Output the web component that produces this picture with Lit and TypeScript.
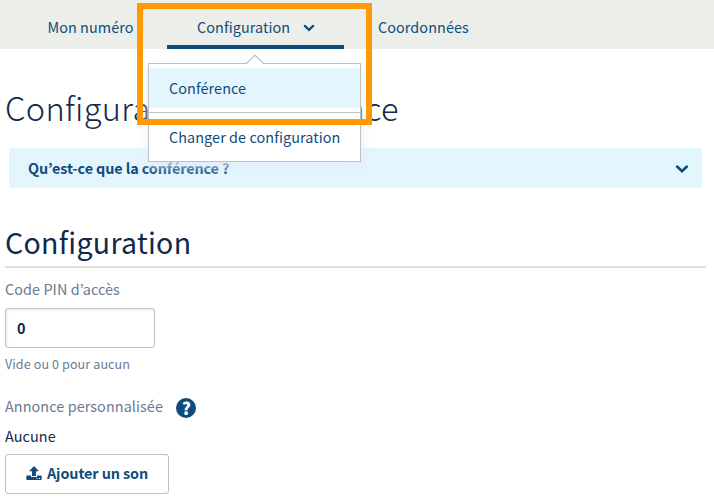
import { LitElement, html, css } from "lit";
import { customElement, property } from "lit/decorators.js";

@customElement("chevron-icon")
class ChevronIcon extends LitElement {
  static styles = css`
    :host { display: block; width: 12px; height: 8px; }
    svg { display: block; width: 100%; height: 100%; }
    path { fill: none; stroke: #0f4c7d; stroke-width: 2.2; stroke-linecap: round; stroke-linejoin: miter; }
  `;
  render() {
    return html`<svg viewBox="0 0 12 8"><path d="M1.8 1.9 6 5.9 10.2 1.9" /></svg>`;
  }
}

@customElement("nav-menu")
class NavMenu extends LitElement {
  @property({ attribute: false }) items: string[] = [];
  static styles = css`
    :host {
      display: block; box-sizing: border-box; width: 213px; height: 99px;
      background: #fff; border: 1px solid #bfc0c3;
      box-shadow: 0 5px 10px rgba(225, 236, 250, 0.9);
    }
    .arrow { position: absolute; left: 97px; top: -10px; width: 18px; height: 11px; }
    .fill { fill: #fff; }
    .edge { fill: none; stroke: #bfc0c3; stroke-width: 1.2; }
    .item { padding: 4px 0; height: 40px; }
    .item + .item { border-top: 1px solid #bfc0c3; }
    .label { height: 40px; line-height: 40px; padding-left: 20px; white-space: nowrap; }
    .active { background: #e3f6fd; }
  `;
  render() {
    return html`
      <svg class="arrow" viewBox="0 0 18 11"><path class="fill" d="M.5 9.5 9 1.2 17.5 9.5V11H.5Z" /><path class="edge" d="M0 9.5H.5L9 1.2 17.5 9.5H18" /></svg>
      ${this.items.map((t, i) => html`<div class="item"><div class="label ${i === 0 ? "active" : ""}">${t}</div></div>`)}
    `;
  }
}

@customElement("app-root")
class AppRoot extends LitElement {
  static styles = css`
    :host {
      display: block; position: relative; width: 714px; height: 499px; overflow: hidden;
      background: #fff; color: #0f4c7d;
      font-family: "Noto Sans CJK KR", "Noto Sans", sans-serif; font-size: 14.4px; letter-spacing: 0.08px;
    }
    nav { display: flex; height: 49px; background: #ebeee9; padding-left: 47px; box-sizing: border-box; line-height: 54px; }
    .first { width: 120px; text-indent: 0.4px; }
    .current { box-sizing: border-box; width: 177px; border-bottom: 4px solid #0f4c7d; padding-left: 30px; display: flex; position: relative; }
    .current span { width: 106px; }
    .current chevron-icon { margin-top: 24px; }
    .last { padding-left: 34px; }
    nav-menu { position: absolute; left: -19px; top: 63px; line-height: normal; }
    .frame { position: absolute; left: 137px; top: 3px; width: 235px; height: 122px; box-sizing: border-box; border: 6px solid #ff9906; }
    h1, h2 { margin: 0; color: #10294c; white-space: nowrap; }
    h1 { font-size: 32.5px; font-weight: 200; letter-spacing: 0.35px; word-spacing: 16px; height: 99px; line-height: 116px; padding-left: 5px; }
    .info { margin-left: 9px; width: 693px; height: 40px; box-sizing: border-box; background: #e3f6fd; border-radius: 3px; display: flex; justify-content: space-between; padding: 0 13px 0 19px; line-height: 40px; font-weight: 700; letter-spacing: -0.1px; }
    .info chevron-icon { width: 14px; height: 10px; margin-top: 16px; }
    .content { margin: 0 8px 0 5px; }
    h2 { height: 78px; line-height: 107px; font-size: 28.5px; font-weight: 400; letter-spacing: 0.3px; border-bottom: 2px solid #dfdfdf; }
    .muted { color: #6c7a91; }
    .pin { line-height: 42px; height: 40px; }
    .field { box-sizing: border-box; width: 150px; height: 40px; border: 1px solid #bfc0c3; border-radius: 3px; box-shadow: inset 1px 1px 3px rgba(90, 100, 170, 0.12); padding-left: 11px; line-height: 37px; font-weight: 700; color: #10294c; }
    .hint { font-size: 12.6px; height: 42px; line-height: 32px; }
    .sound { display: flex; height: 35px; line-height: 32px; }
    .sound span { width: 171.4px; }
    .help { width: 20px; height: 20px; margin-top: 8px; border-radius: 50%; background: #0f4c7d; color: #fff; line-height: 19px; text-align: center; font-weight: 900; font-size: 17px; }
    .none { height: 29px; line-height: 22px; color: #10294c; }
    .add { box-sizing: border-box; width: 164px; height: 40px; border: 1px solid #bfc0c3; border-radius: 3px; display: flex; padding-left: 20px; line-height: 36px; font-weight: 700; letter-spacing: -0.1px; }
    .add svg { width: 16px; height: 15px; margin: 11px 5px 0 0; fill: #0f4c7d; }
  `;
  render() {
    return html`
      <nav>
        <div class="first">Mon numéro</div>
        <div class="current"><span>Configuration</span><chevron-icon></chevron-icon>
          <nav-menu .items=${["Conférence", "Changer de configuration"]}></nav-menu></div>
        <div class="last">Coordonnées</div>
      </nav>
      <h1>Configuration conférence</h1>
      <div class="info"><span>Qu’est-ce que la conférence ?</span><chevron-icon></chevron-icon></div>
      <div class="content">
        <h2>Configuration</h2>
        <div class="muted pin">Code PIN d’accès</div>
        <div class="field">0</div>
        <div class="muted hint">Vide ou 0 pour aucun</div>
        <div class="sound"><span class="muted">Annonce personnalisée</span><div class="help">?</div></div>
        <div class="none">Aucune</div>
        <div class="add"><svg viewBox="0 0 16 15"><path d="M8 0 13 5.3H10V10H6V5.3H3Z" /><path fill-rule="evenodd" d="M1 9.5H5V11H11V9.5H15Q15.7 9.5 15.7 10.2V13.3Q15.7 14 15 14H1Q.3 14 .3 13.3V10.2Q.3 9.5 1 9.5ZM10.6 12V13H11.6V12ZM13 12V13H14V12Z" /></svg><span>Ajouter un son</span></div>
      </div>
      <div class="frame"></div>
    `;
  }
}
